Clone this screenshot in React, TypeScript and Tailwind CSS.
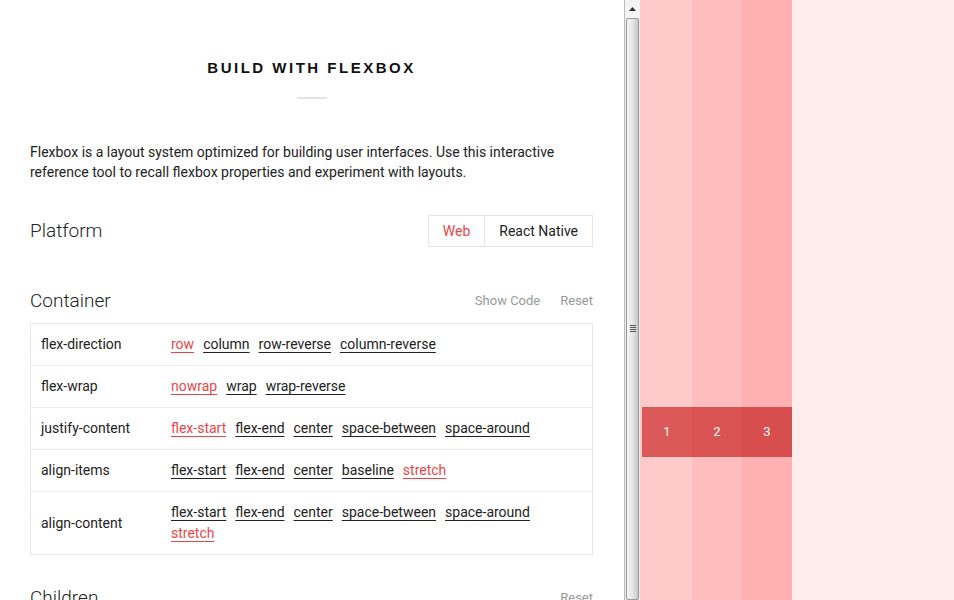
import React from "react";

const Link = ({ children, active }: { children: React.ReactNode; active?: boolean }) => (
  <span className={`underline underline-offset-[3px] ${active ? "text-[#e8474a] decoration-[#e8474a]" : "text-[#222] decoration-[#222]"}`}>
    {children}
  </span>
);

type Row = { label: string; values: { v: string; a?: boolean }[] };

const rows: Row[] = [
  { label: "flex-direction", values: [{ v: "row", a: true }, { v: "column" }, { v: "row-reverse" }, { v: "column-reverse" }] },
  { label: "flex-wrap", values: [{ v: "nowrap", a: true }, { v: "wrap" }, { v: "wrap-reverse" }] },
  { label: "justify-content", values: [{ v: "flex-start", a: true }, { v: "flex-end" }, { v: "center" }, { v: "space-between" }, { v: "space-around" }] },
  { label: "align-items", values: [{ v: "flex-start" }, { v: "flex-end" }, { v: "center" }, { v: "baseline" }, { v: "stretch", a: true }] },
  { label: "align-content", values: [{ v: "flex-start" }, { v: "flex-end" }, { v: "center" }, { v: "space-between" }, { v: "space-around" }, { v: "stretch", a: true }] },
];

export default function App() {
  return (
    <div className="flex h-[600px] w-[954px] overflow-hidden bg-white" style={{ fontFamily: "Roboto, 'Liberation Sans', sans-serif" }}>
      {/* Left panel */}
      <div className="w-[624px] shrink-0 overflow-hidden">
        <div className="px-[30px] w-[623px]">
          <h1
            className="mt-[56px] text-center text-[15px] leading-[24px] font-bold tracking-[2.5px] text-[#111]"
            style={{ fontFamily: "'Liberation Sans', Arial, sans-serif" }}
          >
            BUILD WITH FLEXBOX
          </h1>
          <div className="mx-auto mt-[17px] h-[2px] w-[30px] bg-[#e2e2e2]" />
          <p className="mt-[43px] text-[14px] leading-[20px] text-[#222]">
            Flexbox is a layout system optimized for building user interfaces. Use this interactive reference tool to recall flexbox properties and experiment with layouts.
          </p>
          <div className="mt-[33px] flex items-center justify-between">
            <h2 className="text-[19px] font-light text-[#222]">Platform</h2>
            <div className="flex h-[32px] border border-[#e6e6e6] text-[14px]">
              <span className="flex items-center px-[14px] text-[#e8474a] border-r border-[#e6e6e6]">Web</span>
              <span className="flex items-center px-[14px] text-[#222]">React Native</span>
            </div>
          </div>
          <div className="mt-[41px] flex items-center justify-between">
            <h2 className="text-[19px] leading-[26px] font-light text-[#222]">Container</h2>
            <div className="flex gap-[20px] text-[13px] text-[#999]">
              <span>Show Code</span>
              <span>Reset</span>
            </div>
          </div>
          <div className="mt-[9px] border border-[#e8e8e8] text-[14px] leading-[21px] text-[#222]">
            {rows.map((r, i) => (
              <div key={r.label} className={`flex items-center py-[10px] ${i > 0 ? "border-t border-[#ececec]" : ""}`}>
                <div className="w-[140px] shrink-0 pl-[10px]">{r.label}</div>
                <div className="flex w-[390px] flex-wrap gap-x-[9px]">
                  {r.values.map((x) => (
                    <Link key={x.v} active={x.a}>
                      {x.v}
                    </Link>
                  ))}
                </div>
              </div>
            ))}
          </div>
          <div className="mt-[30px] flex items-center justify-between">
            <h2 className="text-[19px] leading-[26px] font-light text-[#222]">Children</h2>
            <span className="text-[13px] text-[#999]">Reset</span>
          </div>
        </div>
      </div>

      {/* Scrollbar */}
      <div className="flex w-[16px] shrink-0 flex-col bg-[#ececec] border-l border-[#bdbdbd]">
        <div className="flex h-[18px] items-center justify-center bg-[#f4f4f4]">
          <svg width="7" height="4" viewBox="0 0 7 4">
            <path d="M0 4 L3.5 0 L7 4 Z" fill="#333" />
          </svg>
        </div>
        <div className="mx-[1px] flex flex-1 flex-col items-center rounded-[2px] border border-[#9a9a9a] bg-gradient-to-r from-[#f6f6f6] via-[#e6e6e6] to-[#c8c8c8] pt-[306px]">
          <div className="flex flex-col gap-[1px]">
            <div className="h-[1px] w-[6px] bg-[#555]" />
            <div className="h-[1px] w-[6px] bg-[#555]" />
            <div className="h-[1px] w-[6px] bg-[#555]" />
            <div className="h-[1px] w-[6px] bg-[#555]" />
          </div>
        </div>
      </div>

      {/* Preview */}
      <div className="relative flex flex-1 bg-[#ffeded]">
        <div className="w-[52px] bg-[#ffcaca]" />
        <div className="w-[50px] bg-[#ffbdbd]" />
        <div className="w-[50px] bg-[#ffb1b1]" />
        <div className="absolute left-[2px] top-[407px] flex h-[50px] text-[13px] text-white">
          <div className="flex w-[50px] items-center justify-center bg-[#dc5959]">1</div>
          <div className="flex w-[50px] items-center justify-center bg-[#da5353]">2</div>
          <div className="flex w-[50px] items-center justify-center bg-[#d84e4e]">3</div>
        </div>
      </div>
    </div>
  );
}
